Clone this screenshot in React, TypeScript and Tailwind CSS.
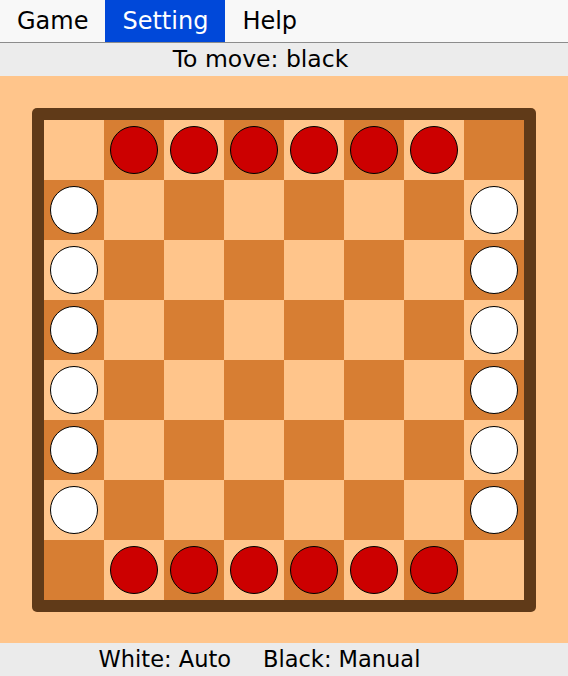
import React from 'react';

type Piece = 'red' | 'white' | null;

// starting layout: red along top and bottom rows, white down both edges
function pieceAt(r: number, c: number): Piece {
  if ((r === 0 || r === 7) && c >= 1 && c <= 6) return 'red';
  if ((c === 0 || c === 7) && r >= 1 && r <= 6) return 'white';
  return null;
}

const menus = ['Game', 'Setting', 'Help'];

export default function App() {
  const rows = Array.from({ length: 8 }, (_, r) => r);
  const cols = Array.from({ length: 8 }, (_, c) => c);

  return (
    <div
      className="w-[568px] h-[676px] flex flex-col overflow-hidden text-black"
      style={{ fontFamily: '"DejaVu Sans", "Liberation Sans", sans-serif' }}
    >
      {/* Menu bar */}
      <div className="h-[43px] flex bg-[#f8f8f8] border-b border-[#8c8c8c]">
        {menus.map((m) => (
          <div
            key={m}
            className={`h-[42px] flex items-center px-[17px] text-[24px] ${
              m === 'Setting' ? 'bg-[#0048d9] text-white' : ''
            }`}
          >
            {m}
          </div>
        ))}
      </div>

      {/* Status */}
      <div className="h-[33px] flex items-center justify-center pr-[47px] bg-[#ececec] text-[23.5px]">
        To move: black
      </div>

      {/* Board area */}
      <div className="flex-1 bg-[#ffc58b] flex items-center justify-center">
        <div className="p-[12px] bg-[#603a18] rounded-[5px]">
          <div className="grid grid-cols-8">
            {rows.map((r) =>
              cols.map((c) => {
                const p = pieceAt(r, c);
                const dark = (r + c) % 2 === 1;
                return (
                  <div
                    key={`${r}-${c}`}
                    className={`w-[60px] h-[60px] flex items-center justify-center ${
                      dark ? 'bg-[#d77e33]' : 'bg-[#ffc58b]'
                    }`}
                  >
                    {p && (
                      <div
                        className={`w-[48px] h-[48px] rounded-full border-[1.5px] border-black ${
                          p === 'red' ? 'bg-[#cc0000]' : 'bg-white'
                        }`}
                      />
                    )}
                  </div>
                );
              })
            )}
          </div>
        </div>
      </div>

      {/* Footer */}
      <div className="h-[33px] flex items-center justify-center gap-[32px] pr-[49px] bg-[#ebebeb] text-[22.5px]">
        <span>White: Auto</span>
        <span>Black: Manual</span>
      </div>
    </div>
  );
}
